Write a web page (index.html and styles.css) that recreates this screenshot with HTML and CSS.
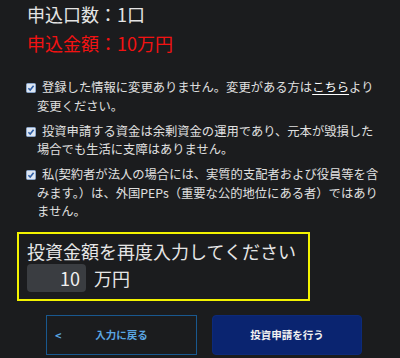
FILE: index.html
```html
<!DOCTYPE html>
<html lang="ja">
<head>
<meta charset="utf-8">
<link rel="stylesheet" href="styles.css">
</head>
<body>
<div class="page">
  <div class="summary">
    <div class="sum-line">申込口数：1口</div>
    <div class="sum-line amount">申込金額：10万円</div>
  </div>
  <ul class="checks">
    <li class="check"><span class="box"><svg viewBox="0 0 10 10" width="10" height="10"><rect x="0.5" y="0.5" width="9" height="9" rx="1" fill="#dde6f3" stroke="#8aa6cc"/><path d="M2.4 5.2 L4.2 7 L7.6 2.8" fill="none" stroke="#2f5fa6" stroke-width="1.6"/></svg></span>登録した情報に変更ありません。変更がある方は<a class="link" href="#">こちら</a>より<wbr>変更ください。</li>
    <li class="check"><span class="box"><svg viewBox="0 0 10 10" width="10" height="10"><rect x="0.5" y="0.5" width="9" height="9" rx="1" fill="#dde6f3" stroke="#8aa6cc"/><path d="M2.4 5.2 L4.2 7 L7.6 2.8" fill="none" stroke="#2f5fa6" stroke-width="1.6"/></svg></span>投資申請する資金は余剰資金の運用であり、元本が毀損した<wbr>場合でも生活に支障はありません。</li>
    <li class="check"><span class="box"><svg viewBox="0 0 10 10" width="10" height="10"><rect x="0.5" y="0.5" width="9" height="9" rx="1" fill="#dde6f3" stroke="#8aa6cc"/><path d="M2.4 5.2 L4.2 7 L7.6 2.8" fill="none" stroke="#2f5fa6" stroke-width="1.6"/></svg></span>私(契約者が法人の場合には、実質的支配者および役員等を含<br>みます。）は、外国PEPs（重要な公的地位にある者）ではあり<br>ません。</li>
  </ul>
  <div class="reenter">
    <div class="reenter-title">投資金額を再度入力してください</div>
    <div class="reenter-row">
      <input class="amount-input" type="text" value="10">
      <span class="unit">万円</span>
    </div>
  </div>
  <div class="actions">
    <button class="btn btn-back"><span class="chev">&lt;</span><span class="btn-label">入力に戻る</span></button>
    <button class="btn btn-submit"><span class="btn-label">投資申請を行う</span></button>
  </div>
</div>
</body>
</html>
```
FILE: styles.css
```css
* { box-sizing: border-box; }
html, body {
  margin: 0;
  padding: 0;
  background: #1b1c1e;
}
body {
  font-family: "Noto Sans CJK JP", "Noto Sans", sans-serif;
  color: #e2e2e2;
  width: 400px;
  height: 358px;
  overflow: hidden;
}
.page {
  padding-left: 27px;
}
.sum-line {
  font-size: 18px;
  line-height: 29px;
  color: #e4e4e4;
}
.sum-line.amount {
  color: #f21212;
}
.checks {
  list-style: none;
  margin: 20px 0 0 0;
  padding: 0 12px 0 10px;
  width: 367px;
}
.check {
  font-size: 12.3px;
  line-height: 18.5px;
  text-indent: -11px;
  margin-bottom: 6.5px;
  color: #e0e0e0;
}
.box {
  display: inline-block;
  width: 10px;
  height: 10px;
  margin-right: 6px;
  vertical-align: -1px;
  text-indent: 0;
}
.box svg { display: block; }
.link {
  color: #ffffff;
  text-decoration: underline;
  text-underline-offset: 2px;
}
.reenter {
  margin: 11px 0 0 -10px;
  width: 293px;
  border: 2px solid #f2f200;
  padding: 4px 8px 7px 8px;
}
.reenter-title {
  font-size: 18px;
  line-height: 26px;
  color: #e6e6e6;
  white-space: nowrap;
}
.reenter-row {
  display: flex;
  align-items: center;
  gap: 8px;
}
.amount-input {
  width: 59px;
  height: 28px;
  background: #3a3d41;
  border: none;
  border-radius: 4px;
  color: #f0f0f0;
  font-family: inherit;
  font-size: 18px;
  text-align: right;
  padding: 0 6px 0 0;
  margin: 0;
  outline: none;
}
.unit {
  font-size: 18px;
  line-height: 28px;
  color: #e6e6e6;
}
.actions {
  display: flex;
  gap: 15px;
  margin: 14px 0 0 19px;
}
.btn {
  position: relative;
  height: 40px;
  width: 151px;
  font-family: inherit;
  font-size: 10.5px;
  font-weight: bold;
  border-radius: 0;
  cursor: pointer;
  padding: 0;
}
.btn-back {
  background: transparent;
  border: 1px solid #19588f;
  color: #5aa6e2;
}
.chev {
  position: absolute;
  left: 8px;
  top: 50%;
  transform: translateY(-50%);
  font-size: 11px;
}
.btn-submit {
  width: 150px;
  background: #0a2470;
  border: 1px solid #0c2a7a;
  border-radius: 4px;
  color: #f2f2f2;
}
```
